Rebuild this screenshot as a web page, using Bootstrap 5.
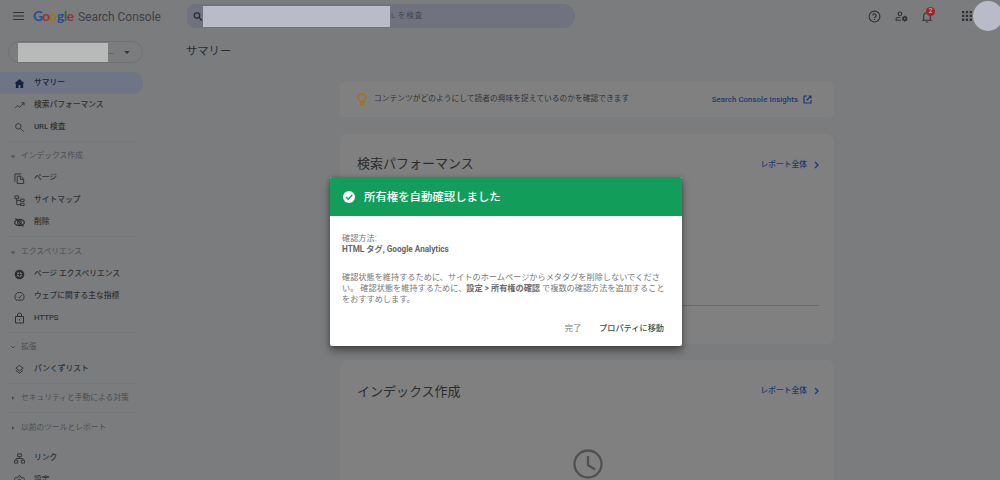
<!DOCTYPE html>
<html lang="ja">
<head>
<meta charset="utf-8">
<meta name="viewport" content="width=device-width, initial-scale=1">
<title>Google Search Console</title>
<link href="https://cdn.jsdelivr.net/npm/bootstrap@5.3.0/dist/css/bootstrap.min.css" rel="stylesheet">
<style>
body{background:#7b7c7e;color:#303133;font-family:Roboto,"Noto Sans CJK JP",sans-serif;font-size:7.75px;line-height:1.4;height:480px;overflow:hidden}
svg{display:block;flex:none;fill:none;stroke:currentColor;stroke-width:2}
.solid{fill:currentColor;stroke:none}
.topbar{height:32px;padding-left:13px}
.wordmark{font-family:Lato,sans-serif;font-size:13.6px;width:45px;letter-spacing:-.45px;font-weight:700;margin-left:9px;padding-top:1px}
.product{font-size:12px;letter-spacing:-.04px;width:109px;color:#3f4143;padding-top:2px}
.searchbox{width:388px;height:24px;border-radius:8px 12px 12px 8px;background:#70737f;padding-left:6px;color:#44464c}
.masked{background:#b9bcc8;width:187px;height:21px}
.query{margin-left:1px;letter-spacing:.45px;padding-top:1px}
.avatar-dot{width:30px;height:30px;background:#b9bcc8;margin:0 -3px 0 1px}
.tally{width:9px;height:9px;background:#a32424;color:#ccc;font-size:6.5px;line-height:9px;top:-3px;left:5px}
.workspace{height:448px;overflow:hidden}
.side{width:186px}
.picker{width:135px;height:22px;border:1px solid #707173;border-radius:11px;margin:9px 0 0 8px}
.picker-mask{width:90px;height:19px;background:#b8b9b9;margin-left:9px}
.navs{margin-top:9px}
.item{height:22px;padding-left:14px;gap:9px;font-weight:500;width:143px;white-space:nowrap}
.item span,.group span{padding-top:1px}
.item.on{background:#6d7586;color:#172240;border-radius:0 11px 11px 0}
.group{height:22px;padding-left:10px;gap:5px;color:#4c4d4f;white-space:nowrap}
.rule{height:1px;background:#767779;width:128px;margin:3px 0 3px 8px}
.page-title{font-size:11.3px;height:40px;color:#2b2c2e}
.feed{width:494px;margin:10px 0 0 154px}
.panel{background:#808080;border-radius:7px;padding:0 15px 0 17px}
.insight{height:35px;margin-bottom:17px;border-radius:3px;padding-right:22px}
.perf{height:210px;margin-bottom:16px}
.panel-head{height:60px}
.panel-head h2{font-size:13px;font-weight:400;margin:0;color:#2b2c2e}
.go{color:#1d3872;font-weight:500;gap:7px}
.panel-head .go{padding-top:1px}
.panel-head .go span{padding-top:1px}
.baseline-rule{height:1px;background:#696969;margin-top:111px}
.dialog-box{top:177px;left:330px;width:352px;height:169px;background:#fff;border-radius:2px;overflow:hidden;color:#777}
.dialog-shadow{box-shadow:0 5px 9px rgba(0,0,0,.38),0 1px 4px rgba(0,0,0,.25)}
.dialog-title{height:39px;background:#129e5a;color:#fff;font-size:11.4px;font-weight:500;padding-left:13px;gap:9px}
.dialog-title span{padding-top:2px}
.dialog-text{padding:17px 12px 0;font-size:8.18px;line-height:11px;white-space:nowrap}
.dialog-text b{font-weight:700;color:#686868}
.dialog-foot{gap:18px;padding:17px 18px 0;font-size:8.18px;line-height:12px}
.dialog-foot .primary{color:#35544b;font-weight:500}
</style>
</head>
<body>
<header class="topbar d-flex align-items-center">
  <svg width="11" height="10" viewBox="0 0 11 10" style="stroke-width:1.2"><path d="M0 1.5h11M0 5h11M0 8.5h11"/></svg>
  <span class="wordmark text-nowrap"><span style="color:#244d96">G</span><span style="color:#98332d">o</span><span style="color:#9a7a17">o</span><span style="color:#244d96">g</span><span style="color:#24713c">l</span><span style="color:#98332d">e</span></span>
  <span class="product text-nowrap">Search Console</span>
  <div class="searchbox d-flex align-items-center">
    <svg width="10" height="11" viewBox="0 0 24 24" style="stroke-width:3" color="#282a30"><circle cx="9.5" cy="9.5" r="6.5"/><path d="M14.5 14.5l7 7"/></svg>
    <div class="masked flex-shrink-0"></div><span class="query text-nowrap">L を検査</span>
  </div>
  <div class="d-flex align-items-center ms-auto">
    <svg width="13" height="13" viewBox="0 0 24 24"><circle cx="12" cy="12" r="10"/><path d="M9 10a3 3 0 1 1 4.800 2.400C12.500 13.300 12 14 12 15M12 16.500v2"/></svg>
    <svg width="13" height="13" viewBox="0 0 24 24" style="margin:0 13px 0 14px"><circle cx="9" cy="7" r="3.300"/><path d="M11 19H2v-2c0-2 3.500-3.500 8-3.500"/><circle cx="18" cy="16" r="3" style="stroke-width:3"/><path d="M18 10.500v3M18 18.500v3M13.300 13.300l2.500 1.500M20.200 17.300l2.500 1.500M13.300 18.700l2.500-1.500M20.200 14.700l2.500-1.500"/></svg>
    <div class="position-relative" style="margin-right:29px">
      <svg width="12" height="13" viewBox="0 0 22 24"><path d="M2 19h18M5 18v-7a6 6 0 0 1 12 0v7M11 5V2M9 22h4"/></svg>
      <span class="tally position-absolute rounded-circle text-center">2</span>
    </div>
    <svg class="solid" width="10" height="10" viewBox="0 0 10 10"><path d="M0 0h2.300v2.300H0zM3.800 0h2.300v2.300H3.800zM7.600 0h2.300v2.300H7.600zM0 3.800h2.300v2.300H0zM3.800 3.800h2.300v2.300H3.800zM7.600 3.800h2.300v2.300H7.600zM0 7.600h2.300v2.300H0zM3.800 7.600h2.300v2.300H3.800zM7.600 7.600h2.300v2.300H7.600z"/></svg>
    <div class="avatar-dot rounded-circle"></div>
  </div>
</header>
<div class="workspace d-flex">
  <aside class="side flex-shrink-0">
    <div class="picker d-flex align-items-center"><div class="picker-mask"></div><span>...</span>
      <svg class="solid" width="6" height="3" viewBox="0 0 7 4" style="margin-left:10px"><path d="M0 0h7L3.500 4z"/></svg></div>
    <nav class="navs">
      <div class="item on d-flex align-items-center"><svg class="solid" width="11" height="11" viewBox="0 0 24 24"><path d="M12 2L1 12h3v10h6v-7h4v7h6V12h3z"/></svg><span>サマリー</span></div>
      <div class="item d-flex align-items-center"><svg width="11" height="11" viewBox="0 0 24 24"><path d="M2 18l6-6 4 4 9-9M16 6h6v6"/></svg><span>検索パフォーマンス</span></div>
      <div class="item d-flex align-items-center"><svg width="11" height="11" viewBox="0 0 24 24"><circle cx="9.500" cy="9.500" r="6"/><path d="M14 14l7 7"/></svg><span>URL 検査</span></div>
      <div class="rule"></div>
      <div class="group d-flex align-items-center"><svg class="solid" width="6" height="5" viewBox="0 0 6 5"><path d="M.5 1.500h5L3 4z"/></svg><span>インデックス作成</span></div>
      <div class="item d-flex align-items-center"><svg width="11" height="11" viewBox="0 0 24 24"><path d="M16 2H2v17M7 7h8l6 6v10H7zM14 7v7h7"/></svg><span>ページ</span></div>
      <div class="item d-flex align-items-center"><svg width="11" height="11" viewBox="0 0 24 24"><path d="M2 2h8v6H2zM14 9h8v5h-8zM14 18h8v5h-8zM6 8v13h8M6 12h8"/></svg><span>サイトマップ</span></div>
      <div class="item d-flex align-items-center"><svg width="11" height="11" viewBox="0 0 24 24" style="stroke-width:2.500"><path d="M1 12c4-9 18-9 22 0-4 9-18 9-22 0zM3 3l18 18"/><circle cx="12" cy="12" r="4"/></svg><span>削除</span></div>
      <div class="rule mb-1"></div>
      <div class="group d-flex align-items-center"><svg class="solid" width="6" height="5" viewBox="0 0 6 5"><path d="M.5 1.500h5L3 4z"/></svg><span>エクスペリエンス</span></div>
      <div class="item d-flex align-items-center"><svg width="11" height="11" viewBox="0 0 24 24"><circle cx="12" cy="12" r="8" style="stroke-width:5"/><path d="M12 7v10M7 12h10" style="stroke-width:2.500"/></svg><span>ページ エクスペリエンス</span></div>
      <div class="item d-flex align-items-center"><svg width="11" height="11" viewBox="0 0 24 24"><path d="M5 20a10 10 0 1 1 14 0zM11 15l6-6M10 13l3 3"/></svg><span>ウェブに関する主な指標</span></div>
      <div class="item d-flex align-items-center"><svg width="11" height="12" viewBox="0 0 22 24"><path d="M3 9h16v13H3zM7 9V6a4 4 0 0 1 8 0v3M11 14v3"/></svg><span style="padding-top:0">HTTPS</span></div>
      <div class="rule"></div>
      <div class="group d-flex align-items-center"><svg width="6" height="5" viewBox="0 0 6 5" style="stroke-width:1"><path d="M1 1l2 2 2-2"/></svg><span>拡張</span></div>
      <div class="item d-flex align-items-center"><svg width="11" height="11" viewBox="0 0 24 24"><path d="M12 3l8 6-8 6-8-6zM4 14l8 6 8-6"/></svg><span>パンくずリスト</span></div>
      <div class="rule"></div>
      <div class="group d-flex align-items-center"><svg class="solid" width="6" height="6" viewBox="0 0 6 6"><path d="M2 1l2.500 2L2 5z"/></svg><span>セキュリティと手動による対策</span></div>
      <div class="rule mb-1"></div>
      <div class="group d-flex align-items-center"><svg class="solid" width="6" height="6" viewBox="0 0 6 6"><path d="M2 1l2.500 2L2 5z"/></svg><span>以前のツールとレポート</span></div>
      <div class="item d-flex align-items-center mt-2"><svg width="11" height="11" viewBox="0 0 24 24"><path d="M8 2h8v6H8zM1 16h7v6H1zM16 16h7v6h-7zM12 8v4M4.500 16v-4h15v4"/></svg><span>リンク</span></div>
      <div class="item d-flex align-items-center"><svg width="11" height="11" viewBox="0 0 24 24"><path d="M10 2h4l1 3 3 1.500 3-1 2 4-2.500 2.500 2.500 2.500-2 4-3-1-3 1.500-1 3h-4l-1-3-3-1.500-3 1-2-4L3.500 12 1 9.500l2-4 3 1L9 5z"/><circle cx="12" cy="12" r="3"/></svg><span>設定</span></div>
    </nav>
  </aside>
  <main class="flex-grow-1">
    <div class="page-title d-flex align-items-center">サマリー</div>
    <div class="feed">
      <section class="panel insight d-flex align-items-center">
        <svg width="10" height="13" viewBox="0 0 20 26" color="#a8701a" style="stroke-width:2.600"><path d="M6 18v-3C-2 9 4 2 10 2s12 7 4 13v3zM6 23h8"/></svg>
        <span style="margin-left:7px">コンテンツがどのようにして読者の興味を捉えているのかを確認できます</span>
        <span class="go d-flex align-items-center ms-auto" style="gap:5px"><span style="letter-spacing:.1px;padding-top:1px">Search Console Insights</span><svg width="9" height="9" viewBox="0 0 18 18" style="stroke-width:2.400"><path d="M8 2H2v14h14v-6M11 2h5v5M16 2L7 11"/></svg></span>
      </section>
      <section class="panel perf">
        <div class="panel-head d-flex align-items-center justify-content-between"><h2>検索パフォーマンス</h2><span class="go d-flex align-items-center"><span>レポート全体</span><svg width="5" height="8" viewBox="0 0 5 8" style="stroke-width:1.300"><path d="M1 1l3 3-3 3"/></svg></span></div>
        <div class="baseline-rule"></div>
      </section>
      <section class="panel">
        <div class="panel-head d-flex align-items-center justify-content-between"><h2 class="pt-1">インデックス作成</h2><span class="go d-flex align-items-center"><span>レポート全体</span><svg width="5" height="8" viewBox="0 0 5 8" style="stroke-width:1.300"><path d="M1 1l3 3-3 3"/></svg></span></div>
        <div class="d-flex justify-content-center" style="height:120px;padding-top:29px"><svg width="30" height="30" viewBox="0 0 30 30" color="#505050" style="stroke-width:2.300"><circle cx="15" cy="15" r="13.500"/><path d="M15 7v9l7 4.500"/></svg></div>
      </section>
    </div>
  </main>
</div>
<div class="dialog-box dialog-shadow position-absolute" role="dialog">
  <div class="dialog-title d-flex align-items-center"><svg width="12" height="12" viewBox="0 0 24 24"><circle cx="12" cy="12" r="12" fill="#fff" stroke="none"/><path d="M6 12l4.500 4.500L18.500 8" stroke="#129e5a" style="stroke-width:2.800"/></svg><span>所有権を自動確認しました</span></div>
  <div class="dialog-text">確認方法:<br><b>HTML タグ, Google Analytics</b>
    <div style="margin-top:17px">確認状態を維持するために、サイトのホームページからメタタグを削除しないでくださ<br>い。 確認状態を維持するために、<b>設定 &gt; 所有権の確認</b> で複数の確認方法を追加すること<br>をおすすめします。</div>
  </div>
  <div class="dialog-foot d-flex justify-content-end"><span>完了</span><span class="primary">プロパティに移動</span></div>
</div>
<script src="https://cdn.jsdelivr.net/npm/bootstrap@5.3.0/dist/js/bootstrap.bundle.min.js"></script>
</body>
</html>
